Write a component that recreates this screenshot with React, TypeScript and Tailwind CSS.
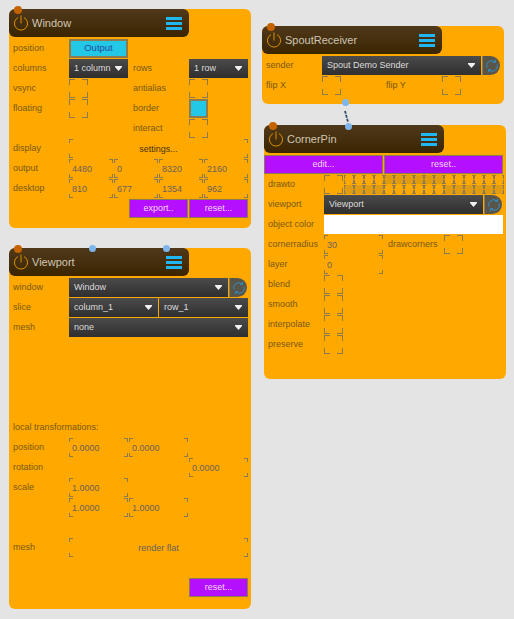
import type { ReactNode } from 'react';

const font = { fontFamily: '"Liberation Sans", Arial, sans-serif' };

function Corners({ arm = 4 }: { arm?: number }) {
  const bar = arm === 6 ? 'w-[6px] h-[6px]' : arm === 3 ? 'w-[2px] h-[4px]' : 'w-1 h-1';
  const tone = 'absolute border-[#8d7a4e]';
  return (
    <>
      <span className={`${tone} ${bar} left-0 top-0 border-l border-t`} />
      <span className={`${tone} ${bar} right-0 top-0 border-r border-t`} />
      <span className={`${tone} ${bar} left-0 bottom-0 border-l border-b`} />
      <span className={`${tone} ${bar} right-0 bottom-0 border-r border-b`} />
    </>
  );
}

function Label({ children, w = 'w-[60px]' }: { children?: ReactNode; w?: string }) {
  return <div className={`${w} shrink-0 pl-1 h-[19px] leading-[19px] text-[9px] text-[#785a10] whitespace-nowrap`}>{children}</div>;
}

function Toggle() {
  return <div className="relative w-[19px] h-[19px] shrink-0"><Corners arm={6} /></div>;
}

function Num({ value, w = 'w-[44px]', mr = 'mr-px' }: { value?: string; w?: string; mr?: string }) {
  return (
    <div className={`relative ${w} ${mr} h-[19px] shrink-0 pl-[3px] leading-[21px] text-[9px] text-[#6b6158]`}>
      <Corners />
      {value}
    </div>
  );
}

function Caret() {
  return (
    <svg width="7" height="5" viewBox="0 0 7 5" className="shrink-0">
      <path d="M0 0H7V1L3.5 5L0 1Z" fill="#f2f2f2" />
    </svg>
  );
}

function Select({ value, w }: { value: string; w: string }) {
  return (
    <div className={`${w} h-[19px] shrink-0 flex items-center justify-between pl-[5px] pr-[6px] bg-gradient-to-b from-[#4b4b4b] to-[#2f2f2f] text-[9px] text-[#dcdcdc]`}>
      <span className="pt-px whitespace-nowrap">{value}</span>
      <Caret />
    </div>
  );
}

function Refresh() {
  return (
    <div className="w-[18px] h-[19px] ml-px shrink-0 flex items-center justify-center rounded-r-full bg-[#5a5549] border-l border-[#8d7a4e]">
      <svg width="14" height="14" viewBox="0 0 14 14" fill="none" stroke="#2f8fca" strokeWidth="1">
        <path d="M2 8.5A5 5 0 0 1 10 3" />
        <path d="M12 5.5A5 5 0 0 1 4 11" />
        <path d="M10.5 0.8V3.4H8" />
        <path d="M3.5 13.2V10.6H6" />
      </svg>
    </div>
  );
}

function Action({ children, w = 'w-[59px]', mr = 'mr-px' }: { children: ReactNode; w?: string; mr?: string }) {
  return (
    <div className={`${w} ${mr} h-[19px] shrink-0 flex items-center justify-center bg-[#b50fff] border border-[#8d7a4e] text-[9px] text-[#f1d6ff]`}>
      <span className="pt-px">{children}</span>
    </div>
  );
}

function Header({ title }: { title: string }) {
  return (
    <div className="w-[180px] h-7 flex items-center rounded-md bg-gradient-to-b from-[#50391b] to-[#3a2500]">
      <svg width="16" height="16" viewBox="0 0 16 16" fill="none" stroke="#e89a00" strokeWidth="0.9" className="ml-[4px] shrink-0">
        <path d="M5 2.6A6.6 6.6 0 1 0 11 2.6" />
        <path d="M8 0.5V8.5" />
      </svg>
      <span className="ml-[3px] text-[11px] text-[#cfc6b4]">{title}</span>
      <div className="ml-auto mr-[7px] w-4 flex flex-col gap-[2px]">
        <span className="h-[3px] bg-[#20b6f2]" />
        <span className="h-[3px] bg-[#20b6f2]" />
        <span className="h-[3px] bg-[#20b6f2]" />
      </div>
    </div>
  );
}

function Row({ children }: { children?: ReactNode }) {
  return <div className="flex h-5">{children}</div>;
}

function Dot({ className }: { className: string }) {
  return <span className={`absolute w-[7px] h-[7px] rounded-full bg-[#7db5ec] ${className}`} />;
}

function Pin({ className }: { className: string }) {
  return <span className={`absolute w-2 h-2 rounded-full bg-[#c56300] ${className}`} />;
}

function Panel({ title, className, children }: { title: string; className: string; children: ReactNode }) {
  return (
    <div className={`absolute w-[242px] rounded-md bg-[#ffa800] ${className}`}>
      <Header title={title} />
      <div className="pt-[2px]">{children}</div>
    </div>
  );
}

function MiniGrid() {
  const dim = (row: number, col: number) => {
    const middle = col >= 4 && col < 10;
    return row === 0 ? middle : !middle;
  };
  return (
    <div className="grid grid-cols-[repeat(16,10px)] grid-rows-[repeat(2,10px)] w-[160px] h-[20px]">
      {[0, 1].map(row =>
        Array.from({ length: 16 }).map((_, col) => (
          <div key={`${row}-${col}`} className={`relative h-[9px] ${dim(row, col) ? 'bg-[#e19b0e]' : ''}`}>
            <Corners arm={3} />
          </div>
        ))
      )}
    </div>
  );
}

export default function App() {
  return (
    <div className="relative w-[514px] h-[619px] overflow-hidden bg-[#e4e4e4]" style={font}>
      {/* Window */}
      <Panel title="Window" className="left-[9px] top-[9px] h-[219px]">
        <Row>
          <Label>position</Label>
          <div className="w-[59px] h-[19px] flex items-center justify-center bg-[#22c8e6] border-2 border-[#8d7a4e] text-[9.5px] text-[#274a9e]">Output</div>
        </Row>
        <Row>
          <Label>columns</Label>
          <Select value="1 column" w="w-[59px]" />
          <div className="w-px" />
          <Label>rows</Label>
          <Select value="1 row" w="w-[59px]" />
        </Row>
        <Row>
          <Label>vsync</Label>
          <div className="w-[60px]"><Toggle /></div>
          <Label>antialias</Label>
          <Toggle />
        </Row>
        <Row>
          <Label>floating</Label>
          <div className="w-[60px]"><Toggle /></div>
          <Label>border</Label>
          <div className="w-[19px] h-[19px] bg-[#22c8e6] border-2 border-[#8d7a4e]" />
        </Row>
        <Row>
          <Label />
          <div className="w-[60px]" />
          <Label>interact</Label>
          <Toggle />
        </Row>
        <Row>
          <Label>display</Label>
          <div className="relative w-[179px] h-[19px] leading-[21px] text-center text-[9px] text-[#4b3400]">
            <Corners />
            settings...
          </div>
        </Row>
        <Row>
          <Label>output</Label>
          <Num value="4480" />
          <Num value="0" />
          <Num value="8320" />
          <Num value="2160" />
        </Row>
        <Row>
          <Label>desktop</Label>
          <Num value="810" />
          <Num value="677" />
          <Num value="1354" />
          <Num value="962" />
        </Row>
        <Row>
          <Label />
          <div className="w-[60px]" />
          <Action>export..</Action>
          <Action>reset...</Action>
        </Row>
      </Panel>
      <Pin className="left-[14px] top-[6px]" />

      {/* Viewport */}
      <Panel title="Viewport" className="left-[9px] top-[248px] h-[361px]">
        <Row>
          <Label>window</Label>
          <Select value="Window" w="w-[159px]" />
          <Refresh />
        </Row>
        <Row>
          <Label>slice</Label>
          <Select value="column_1" w="w-[89px]" />
          <div className="w-px" />
          <Select value="row_1" w="w-[89px]" />
        </Row>
        <Row>
          <Label>mesh</Label>
          <Select value="none" w="w-[179px]" />
        </Row>
        <div className="h-[80px]" />
        <Row><Label>local transformations:</Label></Row>
        <Row>
          <Label>position</Label>
          <Num value="0.0000" w="w-[59px]" />
          <Num value="0.0000" w="w-[59px]" />
        </Row>
        <Row>
          <Label>rotation</Label>
          <div className="w-[120px]" />
          <Num value="0.0000" w="w-[59px]" />
        </Row>
        <Row>
          <Label>scale</Label>
          <Num value="1.0000" w="w-[59px]" />
        </Row>
        <Row>
          <Label />
          <Num value="1.0000" w="w-[59px]" />
          <Num value="1.0000" w="w-[59px]" />
        </Row>
        <div className="h-5" />
        <Row>
          <Label>mesh</Label>
          <div className="relative w-[179px] h-[19px] leading-[21px] text-center text-[9px] text-[#6b6158]">
            <Corners />
            render flat
          </div>
        </Row>
        <div className="h-5" />
        <Row>
          <Label />
          <div className="w-[120px]" />
          <Action>reset...</Action>
        </Row>
      </Panel>
      <Pin className="left-[14px] top-[245px]" />
      <Dot className="left-[89px] top-[245px]" />
      <Dot className="left-[163px] top-[245px]" />

      {/* SpoutReceiver */}
      <Panel title="SpoutReceiver" className="left-[262px] top-[26px] h-[78px]">
        <Row>
          <Label>sender</Label>
          <Select value="Spout Demo Sender" w="w-[159px]" />
          <Refresh />
        </Row>
        <Row>
          <Label>flip X</Label>
          <div className="w-[60px]"><Toggle /></div>
          <Label>flip Y</Label>
          <Toggle />
        </Row>
      </Panel>
      <Pin className="left-[267px] top-[23px]" />

      {/* CornerPin */}
      <Panel title="CornerPin" className="left-[264px] top-[125px] h-[254px]">
        <Row>
          <Action w="w-[119px]">edit...</Action>
          <Action w="w-[119px]">reset..</Action>
        </Row>
        <Row>
          <Label>drawto</Label>
          <div className="w-5"><Toggle /></div>
          <MiniGrid />
        </Row>
        <Row>
          <Label>viewport</Label>
          <Select value="Viewport" w="w-[159px]" />
          <Refresh />
        </Row>
        <Row>
          <Label>object color</Label>
          <div className="w-[179px] h-[19px] bg-white" />
        </Row>
        <Row>
          <Label>cornerradius</Label>
          <Num value="30" w="w-[59px]" />
          <Label>drawcorners</Label>
          <Toggle />
        </Row>
        <Row>
          <Label>layer</Label>
          <Num value="0" w="w-[59px]" />
        </Row>
        <Row><Label>blend</Label><Toggle /></Row>
        <Row><Label>smooth</Label><Toggle /></Row>
        <Row><Label>interpolate</Label><Toggle /></Row>
        <Row><Label>preserve</Label><Toggle /></Row>
      </Panel>
      <Pin className="left-[269px] top-[122px]" />

      {/* patch cable */}
      <svg width="8" height="14" viewBox="0 0 8 14" fill="none" className="absolute left-[342px] top-[110px]">
        <path d="M3 1L6 12" stroke="#2f4257" strokeWidth="1.75" strokeDasharray="3 1" />
        <path d="M3 3L6 10" stroke="#7db5ec" strokeWidth="0.75" strokeDasharray="2 3" />
      </svg>
      <Dot className="left-[342px] top-[99px]" />
      <Dot className="left-[344.5px] top-[122.5px]" />
    </div>
  );
}
